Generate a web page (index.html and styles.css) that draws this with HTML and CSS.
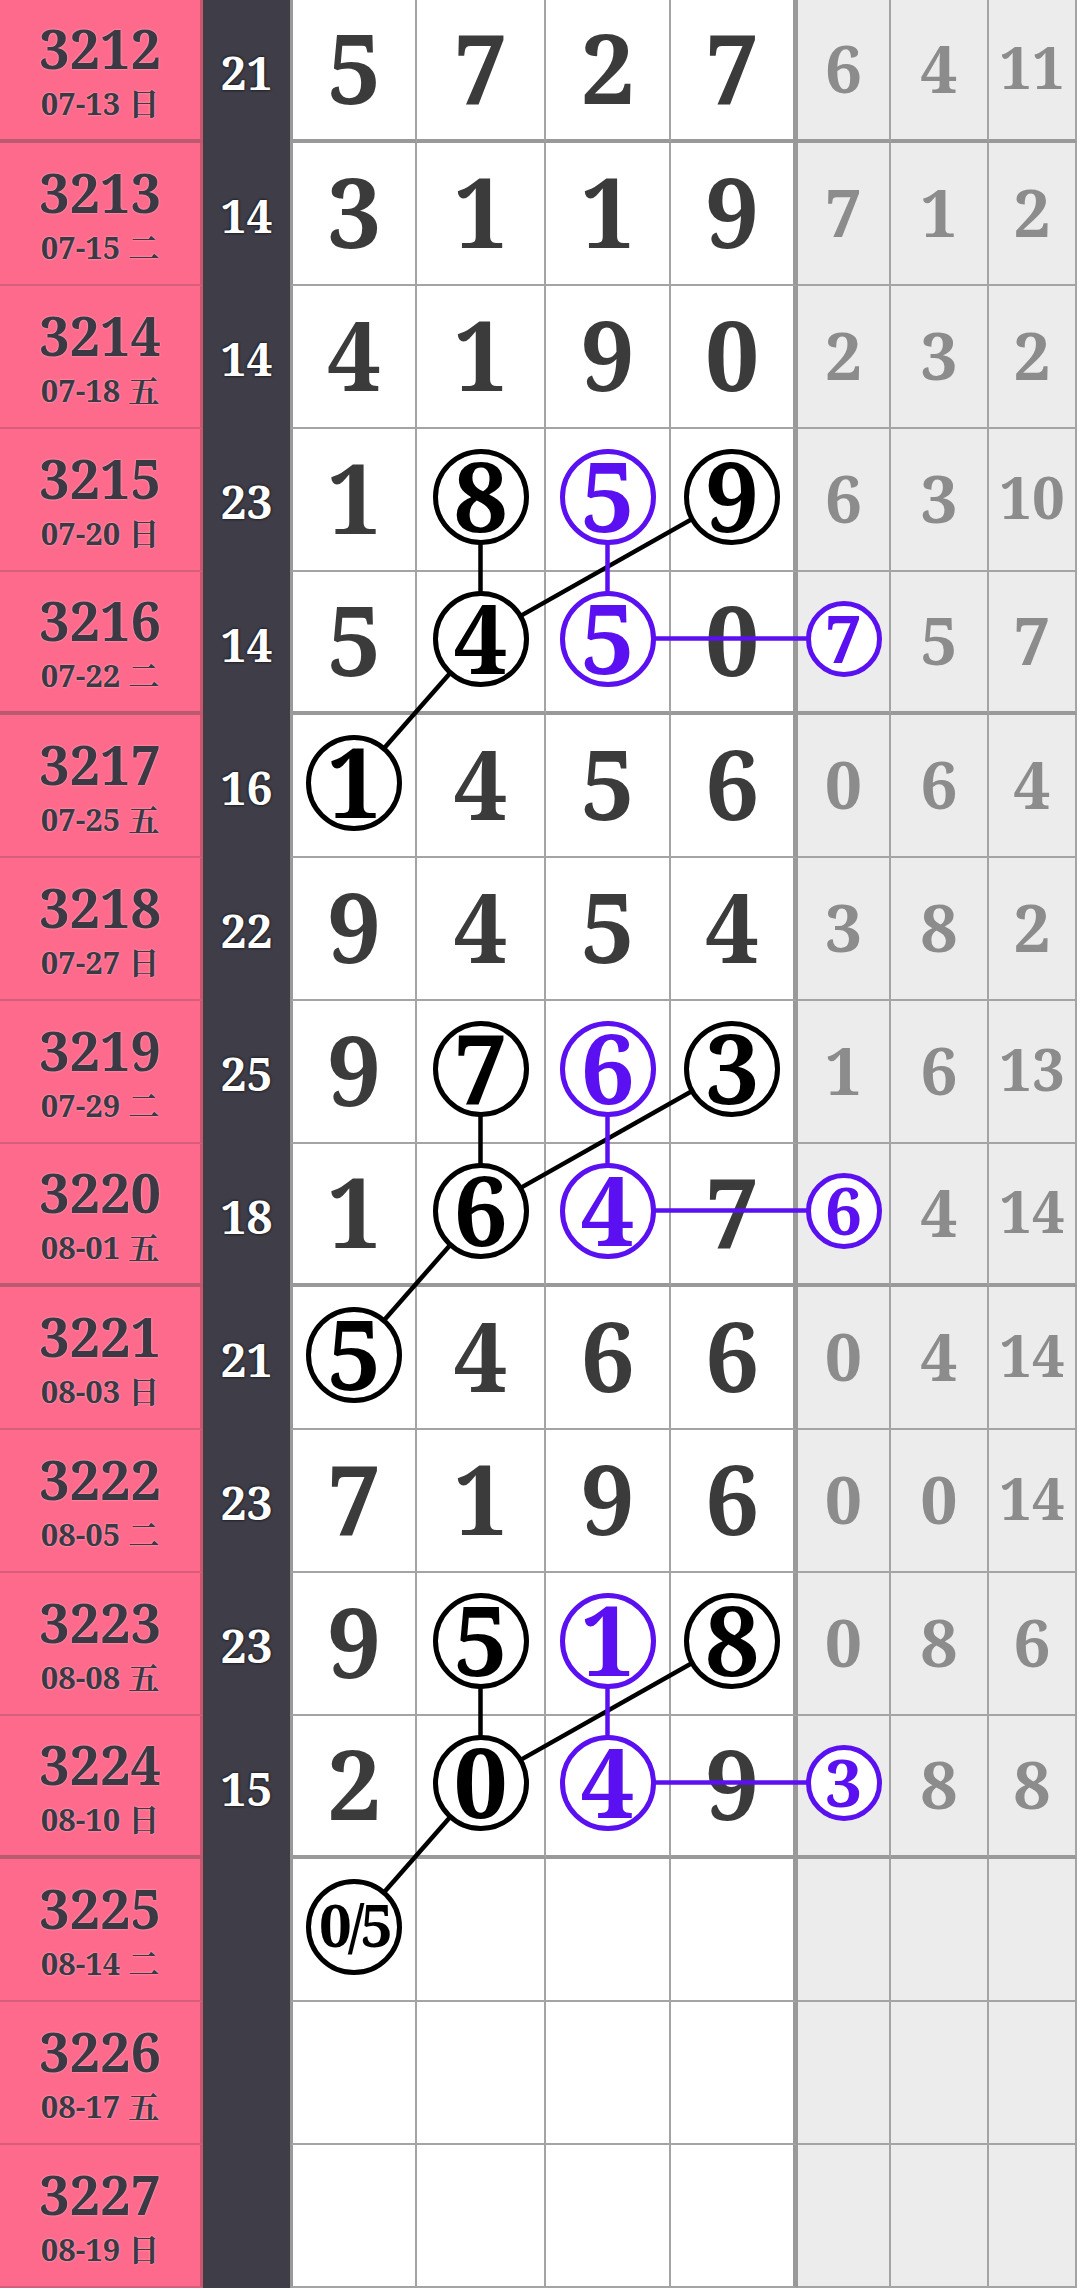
FILE: index.html
```html
<!DOCTYPE html>
<html lang="zh-TW">
<head>
    <meta charset="UTF-8">
    <meta name="viewport" content="width=device-width, initial-scale=1.0">
    <title>走勢圖</title>
    <link rel="stylesheet" href="styles.css">
</head>
<body>

    <div class="board">
        <!-- 連線 (疊在格子上，圈圈再疊在連線上) -->
        <svg class="links" width="1077" height="2288" viewBox="0 0 1077 2288">
            <g stroke="#000" stroke-width="4.5">
                <line x1="480.5" y1="496.5" x2="480.5" y2="638.5"/>
                <line x1="732" y1="496.5" x2="480.5" y2="638.5"/>
                <line x1="480.5" y1="638.5" x2="354" y2="782.5"/>
                <line x1="480.5" y1="1068.5" x2="480.5" y2="1210.5"/>
                <line x1="732" y1="1068.5" x2="480.5" y2="1210.5"/>
                <line x1="480.5" y1="1210.5" x2="354" y2="1354.5"/>
                <line x1="480.5" y1="1640.5" x2="480.5" y2="1782.5"/>
                <line x1="732" y1="1640.5" x2="480.5" y2="1782.5"/>
                <line x1="480.5" y1="1782.5" x2="354" y2="1926.5"/>
            </g>
            <g stroke="#5a10f0" stroke-width="4.5">
                <line x1="607.5" y1="496.5" x2="607.5" y2="638.5"/>
                <line x1="607.5" y1="638.5" x2="843.5" y2="638.5"/>
                <line x1="607.5" y1="1068.5" x2="607.5" y2="1210.5"/>
                <line x1="607.5" y1="1210.5" x2="843.5" y2="1210.5"/>
                <line x1="607.5" y1="1640.5" x2="607.5" y2="1782.5"/>
                <line x1="607.5" y1="1782.5" x2="843.5" y2="1782.5"/>
            </g>
        </svg>

        <div class="row sep">
            <div class="cell no"><span class="num">3212</span><span class="date">07-13 日</span></div>
            <div class="cell sum">21</div>
            <div class="cell d c1">5</div>
            <div class="cell d">7</div>
            <div class="cell d">2</div>
            <div class="cell d c4">7</div>
            <div class="cell g">6</div>
            <div class="cell g">4</div>
            <div class="cell g two">11</div>
        </div>
        <div class="row">
            <div class="cell no"><span class="num">3213</span><span class="date">07-15 二</span></div>
            <div class="cell sum">14</div>
            <div class="cell d c1">3</div>
            <div class="cell d">1</div>
            <div class="cell d">1</div>
            <div class="cell d c4">9</div>
            <div class="cell g">7</div>
            <div class="cell g">1</div>
            <div class="cell g">2</div>
        </div>
        <div class="row">
            <div class="cell no"><span class="num">3214</span><span class="date">07-18 五</span></div>
            <div class="cell sum">14</div>
            <div class="cell d c1">4</div>
            <div class="cell d">1</div>
            <div class="cell d">9</div>
            <div class="cell d c4">0</div>
            <div class="cell g">2</div>
            <div class="cell g">3</div>
            <div class="cell g">2</div>
        </div>
        <div class="row">
            <div class="cell no"><span class="num">3215</span><span class="date">07-20 日</span></div>
            <div class="cell sum">23</div>
            <div class="cell d c1">1</div>
            <div class="cell d"><span class="ring">8</span></div>
            <div class="cell d"><span class="ring violet">5</span></div>
            <div class="cell d c4"><span class="ring">9</span></div>
            <div class="cell g">6</div>
            <div class="cell g">3</div>
            <div class="cell g two">10</div>
        </div>
        <div class="row sep">
            <div class="cell no"><span class="num">3216</span><span class="date">07-22 二</span></div>
            <div class="cell sum">14</div>
            <div class="cell d c1">5</div>
            <div class="cell d"><span class="ring">4</span></div>
            <div class="cell d"><span class="ring violet">5</span></div>
            <div class="cell d c4">0</div>
            <div class="cell g"><span class="ring violet">7</span></div>
            <div class="cell g">5</div>
            <div class="cell g">7</div>
        </div>
        <div class="row">
            <div class="cell no"><span class="num">3217</span><span class="date">07-25 五</span></div>
            <div class="cell sum">16</div>
            <div class="cell d c1"><span class="ring">1</span></div>
            <div class="cell d">4</div>
            <div class="cell d">5</div>
            <div class="cell d c4">6</div>
            <div class="cell g">0</div>
            <div class="cell g">6</div>
            <div class="cell g">4</div>
        </div>
        <div class="row">
            <div class="cell no"><span class="num">3218</span><span class="date">07-27 日</span></div>
            <div class="cell sum">22</div>
            <div class="cell d c1">9</div>
            <div class="cell d">4</div>
            <div class="cell d">5</div>
            <div class="cell d c4">4</div>
            <div class="cell g">3</div>
            <div class="cell g">8</div>
            <div class="cell g">2</div>
        </div>
        <div class="row">
            <div class="cell no"><span class="num">3219</span><span class="date">07-29 二</span></div>
            <div class="cell sum">25</div>
            <div class="cell d c1">9</div>
            <div class="cell d"><span class="ring">7</span></div>
            <div class="cell d"><span class="ring violet">6</span></div>
            <div class="cell d c4"><span class="ring">3</span></div>
            <div class="cell g">1</div>
            <div class="cell g">6</div>
            <div class="cell g two">13</div>
        </div>
        <div class="row sep">
            <div class="cell no"><span class="num">3220</span><span class="date">08-01 五</span></div>
            <div class="cell sum">18</div>
            <div class="cell d c1">1</div>
            <div class="cell d"><span class="ring">6</span></div>
            <div class="cell d"><span class="ring violet">4</span></div>
            <div class="cell d c4">7</div>
            <div class="cell g"><span class="ring violet">6</span></div>
            <div class="cell g">4</div>
            <div class="cell g two">14</div>
        </div>
        <div class="row">
            <div class="cell no"><span class="num">3221</span><span class="date">08-03 日</span></div>
            <div class="cell sum">21</div>
            <div class="cell d c1"><span class="ring">5</span></div>
            <div class="cell d">4</div>
            <div class="cell d">6</div>
            <div class="cell d c4">6</div>
            <div class="cell g">0</div>
            <div class="cell g">4</div>
            <div class="cell g two">14</div>
        </div>
        <div class="row">
            <div class="cell no"><span class="num">3222</span><span class="date">08-05 二</span></div>
            <div class="cell sum">23</div>
            <div class="cell d c1">7</div>
            <div class="cell d">1</div>
            <div class="cell d">9</div>
            <div class="cell d c4">6</div>
            <div class="cell g">0</div>
            <div class="cell g">0</div>
            <div class="cell g two">14</div>
        </div>
        <div class="row">
            <div class="cell no"><span class="num">3223</span><span class="date">08-08 五</span></div>
            <div class="cell sum">23</div>
            <div class="cell d c1">9</div>
            <div class="cell d"><span class="ring">5</span></div>
            <div class="cell d"><span class="ring violet">1</span></div>
            <div class="cell d c4"><span class="ring">8</span></div>
            <div class="cell g">0</div>
            <div class="cell g">8</div>
            <div class="cell g">6</div>
        </div>
        <div class="row sep">
            <div class="cell no"><span class="num">3224</span><span class="date">08-10 日</span></div>
            <div class="cell sum">15</div>
            <div class="cell d c1">2</div>
            <div class="cell d"><span class="ring">0</span></div>
            <div class="cell d"><span class="ring violet">4</span></div>
            <div class="cell d c4">9</div>
            <div class="cell g"><span class="ring violet">3</span></div>
            <div class="cell g">8</div>
            <div class="cell g">8</div>
        </div>
        <div class="row">
            <div class="cell no"><span class="num">3225</span><span class="date">08-14 二</span></div>
            <div class="cell sum"></div>
            <div class="cell d c1"><span class="ring frac">0/5</span></div>
            <div class="cell d"></div>
            <div class="cell d"></div>
            <div class="cell d c4"></div>
            <div class="cell g"></div>
            <div class="cell g"></div>
            <div class="cell g"></div>
        </div>
        <div class="row">
            <div class="cell no"><span class="num">3226</span><span class="date">08-17 五</span></div>
            <div class="cell sum"></div>
            <div class="cell d c1"></div>
            <div class="cell d"></div>
            <div class="cell d"></div>
            <div class="cell d c4"></div>
            <div class="cell g"></div>
            <div class="cell g"></div>
            <div class="cell g"></div>
        </div>
        <div class="row">
            <div class="cell no"><span class="num">3227</span><span class="date">08-19 日</span></div>
            <div class="cell sum"></div>
            <div class="cell d c1"></div>
            <div class="cell d"></div>
            <div class="cell d"></div>
            <div class="cell d c4"></div>
            <div class="cell g"></div>
            <div class="cell g"></div>
            <div class="cell g"></div>
        </div>
    </div>

</body>
</html>
```

FILE: styles.css
```css
body {
    margin: 0;
    background-color: #fff;
    font-family: "Noto Serif", "DejaVu Serif", "Noto Serif CJK TC", "Noto Sans CJK TC", serif;
    font-weight: bold;
}
.board {
    position: relative;
    width: 1077px;
}
.links {
    position: absolute;
    left: 0;
    top: 0;
    z-index: 1;
    pointer-events: none;
}
.row {
    display: grid;
    grid-template-columns: 203px 87px 127px 129px 125px 127px 93px 98px 88px;
    height: 143px;
}
.cell {
    box-sizing: border-box;
    display: flex;
    align-items: center;
    justify-content: center;
    line-height: 1;
}

/* 期數 + 日期 */
.no {
    flex-direction: column;
    gap: 13px;
    background-color: #fe6a8c;
    color: #3b3a44;
    border-right: 3px solid #c9566f;
    border-bottom: 2px solid #d75e7b;
    text-shadow: 0 0 2px rgba(255, 255, 255, 0.6);
}
.no .num {
    font-size: 54px;
}
.no .date {
    font-size: 31px;
}

/* 和值 */
.sum {
    background-color: #3e3d48;
    color: #fff;
    font-size: 46px;
    text-shadow: 0 0 3px #000;
}

/* 開獎號碼 */
.d {
    background-color: #fff;
    color: #3b3b3b;
    font-size: 96px;
    font-stretch: condensed;
    padding-bottom: 6px;
    border-right: 2px solid #a4a4a4;
    border-bottom: 2px solid #a4a4a4;
}
.d.c1 {
    border-left: 3px solid #999;
}
.d.c4 {
    border-right: 5px solid #999;
}

/* 灰色統計欄 */
.g {
    background-color: #ececec;
    color: #8c8c8c;
    font-size: 66px;
    font-stretch: condensed;
    padding-bottom: 6px;
    border-right: 2px solid #a4a4a4;
    border-bottom: 2px solid #a4a4a4;
}
.g.two {
    font-size: 58px;
}

/* 每四期粗線 */
.sep .no,
.sep .d,
.sep .g {
    border-bottom-width: 4px;
}
.sep .no {
    border-bottom-color: #b95a70;
}
.sep .d,
.sep .g {
    border-bottom-color: #999;
}

/* 圈圈 */
.ring {
    position: relative;
    z-index: 2;
    box-sizing: border-box;
    display: flex;
    align-items: center;
    justify-content: center;
    width: 96px;
    height: 96px;
    padding-bottom: 4px;
    border: 5px solid #000;
    border-radius: 50%;
    background-color: #fff;
    color: #000;
}
.ring.violet {
    border-color: #5a10f0;
    color: #5a10f0;
}
.g .ring {
    width: 76px;
    height: 76px;
}
.ring.frac {
    font-size: 58px;
    letter-spacing: -4px;
}
```
